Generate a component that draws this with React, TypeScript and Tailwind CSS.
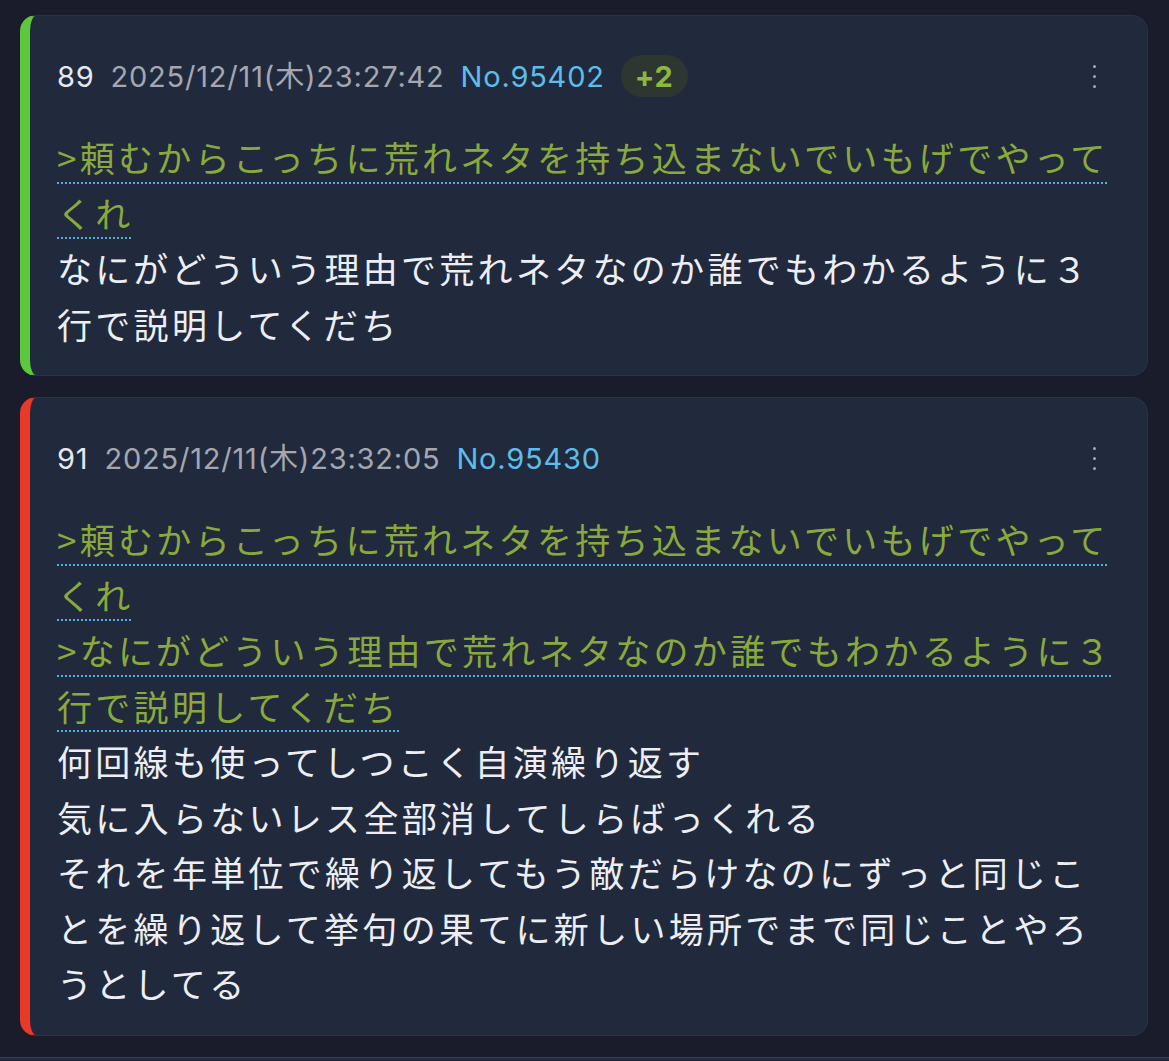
type Post = {
  num: number;
  date: string;
  no: string;
  badge?: string;
  accent: string;
  quotes: string[][];
  body: string[];
};

const posts: Post[] = [
  {
    num: 89,
    date: "2025/12/11(木)23:27:42",
    no: "No.95402",
    badge: "+2",
    accent: "border-l-[#5cc83c]",
    quotes: [[">頼むからこっちに荒れネタを持ち込まないでいもげでやって", "くれ"]],
    body: ["なにがどういう理由で荒れネタなのか誰でもわかるように３", "行で説明してくだち"],
  },
  {
    num: 91,
    date: "2025/12/11(木)23:32:05",
    no: "No.95430",
    accent: "border-l-[#e8392a]",
    quotes: [
      [">頼むからこっちに荒れネタを持ち込まないでいもげでやって", "くれ"],
      [">なにがどういう理由で荒れネタなのか誰でもわかるように３", "行で説明してくだち"],
    ],
    body: [
      "何回線も使ってしつこく自演繰り返す",
      "気に入らないレス全部消してしらばっくれる",
      "それを年単位で繰り返してもう敵だらけなのにずっと同じこ",
      "とを繰り返して挙句の果てに新しい場所でまで同じことやろ",
      "うとしてる",
    ],
  },
];

function Kebab() {
  return (
    <div className="flex flex-col items-center gap-[7px] pr-[1px]">
      <span className="block h-[3px] w-[3px] rounded-full bg-[#a3a8b6]" />
      <span className="block h-[3px] w-[3px] rounded-full bg-[#a3a8b6]" />
      <span className="block h-[3px] w-[3px] rounded-full bg-[#a3a8b6]" />
    </div>
  );
}

function PostCard({ post }: { post: Post }) {
  return (
    <div
      className={`rounded-[16px] border border-[#2a3249] border-l-[10px] ${post.accent} bg-[#212a3d] pt-[39px] pb-[24px] pl-[27px] pr-[35px]`}
    >
      {/* header */}
      <div className="flex h-[42px] items-center justify-between">
        <div
          className="flex items-center gap-[16px] text-[29px] leading-none tracking-[0.8px]"
          style={{ fontFamily: 'Inter, "Noto Sans CJK JP", sans-serif' }}
        >
          <span className="text-[#e6e8ee]">{post.num}</span>
          <span className="text-[#a4a7b0]">{post.date}</span>
          <span className="text-[#5dbde9]">{post.no}</span>
          {post.badge && (
            <span className="flex h-[42px] items-center rounded-full bg-[#2e3631] px-[14px] font-bold text-[#8db83b]">
              {post.badge}
            </span>
          )}
        </div>
        <div className="mr-[15px]">
          <Kebab />
        </div>
      </div>

      {/* body */}
      <div
        className="mt-[32px] whitespace-nowrap text-[35px] leading-[55.5px] tracking-[3.3px]"
        style={{ fontFamily: '"Noto Sans CJK JP", sans-serif' }}
      >
        {post.quotes.map((q, i) => (
          <div key={i} className="text-[#8aa93d]">
            {q.map((line, j) => (
              <div key={j}>
                <span className="underline decoration-dotted decoration-[#4fb0de] decoration-2 underline-offset-[10px]">
                  {line}
                </span>
              </div>
            ))}
          </div>
        ))}
        <div className="text-[#eceef3]">
          {post.body.map((line, i) => (
            <div key={i}>{line}</div>
          ))}
        </div>
      </div>
    </div>
  );
}

export default function App() {
  return (
    <div className="flex min-h-[1061px] w-full flex-col bg-[#1a1b2b]">
      <div className="flex flex-col gap-[21px] pt-[15px] pl-[20px] pr-[21px]">
        {posts.map((p) => (
          <PostCard key={p.num} post={p} />
        ))}
      </div>
      <div className="mt-[21px] h-[6px] border-t border-[#333c58] bg-[#222a40]" />
    </div>
  );
}
